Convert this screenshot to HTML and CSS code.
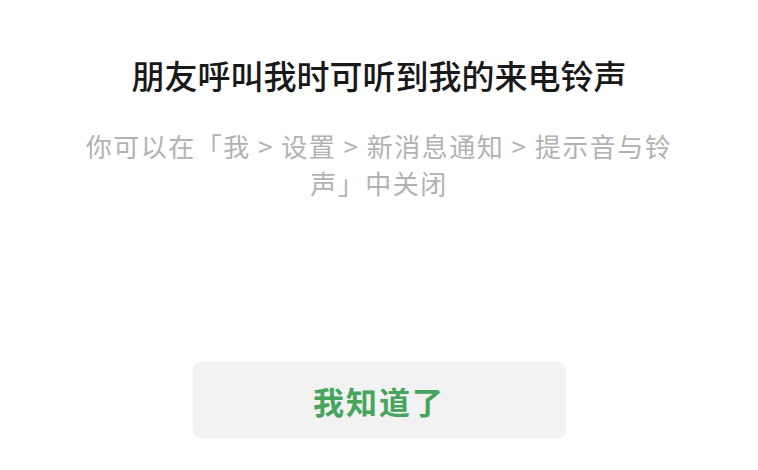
FILE: index.html
```html
<!DOCTYPE html>
<html lang="zh">
<head>
<meta charset="utf-8">
<link rel="stylesheet" href="styles.css">
</head>
<body>
<div class="dialog">
  <h1 class="title">朋友呼叫我时可听到我的来电铃声</h1>
  <p class="desc">你可以在「我 &gt; 设置 &gt; 新消息通知 &gt; 提示音与铃声」中关闭</p>
  <button class="btn">我知道了</button>
</div>
</body>
</html>
```
FILE: styles.css
```css
html, body {
  margin: 0;
  padding: 0;
  background: #ffffff;
}
.dialog {
  width: 758px;
  height: 470px;
  display: flex;
  flex-direction: column;
  align-items: center;
  font-family: "Noto Sans CJK SC", "Noto Sans", sans-serif;
  box-sizing: border-box;
  padding-top: 54px;
}
.title {
  margin: 0;
  font-size: 33px;
  font-weight: 500;
  line-height: 42px;
  letter-spacing: 0;
  color: #191919;
  text-align: center;
}
.desc {
  margin: 31px 0 0;
  width: 600px;
  font-size: 26px;
  line-height: 37px;
  letter-spacing: 1.5px;
  color: #b2b2b2;
  text-align: center;
}
.btn {
  margin-top: 161px;
  width: 373px;
  height: 76px;
  border: none;
  border-radius: 8px;
  background: #f2f2f2;
  color: #45a55c;
  font-family: "Noto Sans CJK SC", sans-serif;
  font-size: 31px;
  font-weight: 700;
  letter-spacing: 2px;
  padding: 0;
}
```
